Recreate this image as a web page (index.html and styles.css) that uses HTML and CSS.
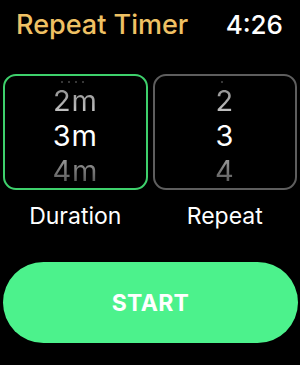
FILE: index.html
```html
<!DOCTYPE html>
<html>
<head>
<meta charset="utf-8">
<link rel="stylesheet" href="styles.css">
</head>
<body>
<div class="screen">
  <header class="header">
    <span class="title">Repeat Timer</span>
    <span class="clock">4:26</span>
  </header>
  <section class="pickers">
    <div class="picker">
      <div class="box box-active">
        <div class="ticks ticks-top">
          <i class="dot"></i><i class="dot"></i><i class="dot"></i><i class="dot"></i>
        </div>
        <div class="item near-top">2m</div>
        <div class="item current">3m</div>
        <div class="item near-bottom">4m</div>
        <div class="ticks ticks-bottom ticks-left"><i class="bar"></i></div>
      </div>
      <div class="label">Duration</div>
    </div>
    <div class="picker">
      <div class="box">
        <div class="ticks ticks-top">
          <i class="dot"></i>
        </div>
        <div class="item near-top">2</div>
        <div class="item current">3</div>
        <div class="item near-bottom">4</div>
        <div class="ticks ticks-bottom"><i class="bar"></i></div>
      </div>
      <div class="label">Repeat</div>
    </div>
  </section>
  <button class="start">START</button>
</div>
</body>
</html>
```
FILE: styles.css
```css
* { box-sizing: border-box; }
html, body {
  margin: 0;
  padding: 0;
  background: #000;
}
body {
  width: 300px;
  height: 365px;
  overflow: hidden;
  font-family: Inter, "Liberation Sans", sans-serif;
  color: #fff;
}
.screen {
  display: flex;
  flex-direction: column;
  padding: 8px 0 0 0;
}
.header {
  display: flex;
  justify-content: space-between;
  align-items: baseline;
  padding: 0 17px 0 16px;
  height: 34px;
  line-height: 34px;
  font-size: 27px;
  font-weight: 500;
}
.title {
  color: #efc164;
}
.clock {
  color: #fff;
  font-size: 26px;
}
.pickers {
  display: flex;
  gap: 5px;
  padding: 0 3px 0 3px;
  margin-top: 32px;
}
.picker {
  flex: 1;
  display: flex;
  flex-direction: column;
  align-items: center;
}
.box {
  width: 100%;
  height: 116px;
  border: 2px solid #5e5e5e;
  border-radius: 13px;
  overflow: hidden;
  display: flex;
  flex-direction: column;
  align-items: center;
  font-size: 29px;
  line-height: 35px;
  letter-spacing: 0.8px;
}
.box-active {
  border-color: #3ed06c;
}
.ticks {
  display: flex;
  justify-content: center;
  gap: 5px;
}
.ticks-top {
  margin-top: 5px;
  height: 2px;
  margin-left: -6px;
}
.ticks-bottom {
  height: 2px;
  margin-top: 0;
}
.ticks-left {
  margin-left: -22px;
}
.dot {
  width: 2px;
  height: 2px;
  border-radius: 1px;
  background: #4a4a4a;
}
.bar {
  width: 15px;
  height: 2px;
  background: #3a3a3a;
}
.item {
  height: 35px;
}
.current { color: #fff; }
.near-top {
  background: linear-gradient(#858585, #cfcfcf);
  -webkit-background-clip: text;
  background-clip: text;
  color: transparent;
}
.near-bottom {
  background: linear-gradient(#a8a8a8, #4a4a4a);
  -webkit-background-clip: text;
  background-clip: text;
  color: transparent;
}
.label {
  margin-top: 12px;
  font-size: 23px;
  line-height: 28px;
  color: #fff;
}
.start {
  margin: 32px 2px 0 3px;
  height: 81px;
  border: none;
  border-radius: 41px;
  background: #4cf28c;
  color: #fff;
  font-family: Inter, "Liberation Sans", sans-serif;
  font-weight: 700;
  font-size: 23px;
  letter-spacing: 0.3px;
  padding: 0;
}
```
